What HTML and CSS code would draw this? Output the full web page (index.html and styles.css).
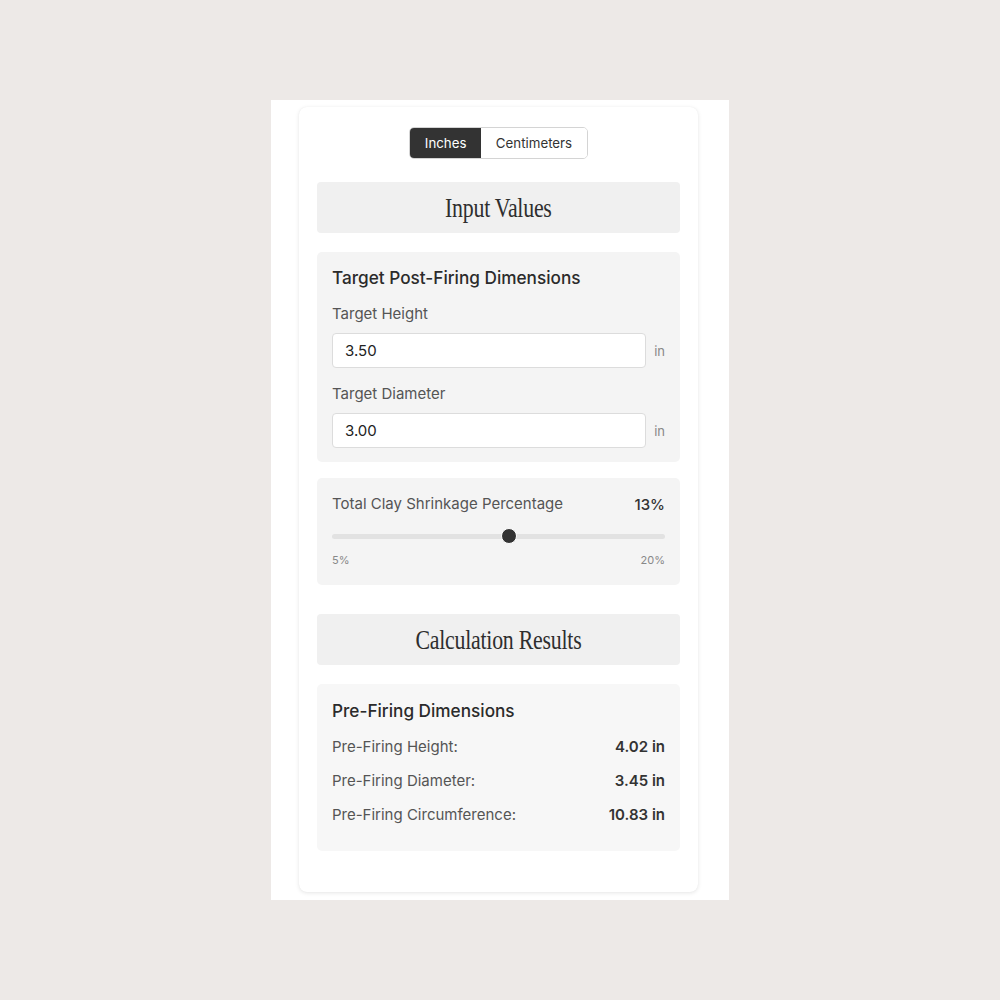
FILE: index.html
```html
<!DOCTYPE html>
<html>
<head>
<meta charset="utf-8">
<link rel="stylesheet" href="styles.css">
</head>
<body>
<div class="frame">
  <div class="card">
    <div class="toggle">
      <button class="seg active">Inches</button>
      <button class="seg">Centimeters</button>
    </div>

    <div class="band"><h2 class="serif">Input Values</h2></div>

    <div class="panel dims">
      <h3 class="panel-title">Target Post-Firing Dimensions</h3>
      <label class="field-label">Target Height</label>
      <div class="field-row">
        <input class="num" type="text" value="3.50">
        <span class="unit">in</span>
      </div>
      <label class="field-label">Target Diameter</label>
      <div class="field-row">
        <input class="num" type="text" value="3.00">
        <span class="unit">in</span>
      </div>
    </div>

    <div class="panel shrink">
      <div class="shrink-head">
        <span class="field-label">Total Clay Shrinkage Percentage</span>
        <span class="pct">13%</span>
      </div>
      <input class="range" type="range" min="5" max="20" value="13">
      <div class="range-ends"><span>5%</span><span>20%</span></div>
    </div>

    <div class="band results-band"><h2 class="serif">Calculation Results</h2></div>

    <div class="panel results">
      <h3 class="panel-title">Pre-Firing Dimensions</h3>
      <div class="res-row"><span>Pre-Firing Height:</span><b>4.02 in</b></div>
      <div class="res-row"><span>Pre-Firing Diameter:</span><b>3.45 in</b></div>
      <div class="res-row"><span>Pre-Firing Circumference:</span><b>10.83 in</b></div>
    </div>
  </div>
</div>
</body>
</html>
```

FILE: styles.css
```css
* { box-sizing: border-box; }
html, body { margin: 0; padding: 0; }
body {
  background: #ede9e7;
  font-family: Inter, "Noto Sans", sans-serif;
  color: #333;
  width: 1000px;
  height: 1000px;
}
.frame {
  width: 458px;
  height: 800px;
  margin: 100px 0 0 271px;
  background: #fff;
  padding: 7px 0 0 28px;
}
.card {
  width: 399px;
  height: 785px;
  background: #fff;
  border-radius: 8px;
  box-shadow: 0 1px 4px rgba(0,0,0,0.10), 0 0 1px rgba(0,0,0,0.06);
  padding: 20px 18px 0 18px;
  display: flex;
  flex-direction: column;
}
.toggle {
  align-self: center;
  display: flex;
  border: 1px solid #d4d4d4;
  border-radius: 5px;
  overflow: hidden;
  height: 32px;
}
.seg {
  font-family: Inter, sans-serif;
  font-size: 13.3px;
  border: 0;
  background: #fff;
  color: #333;
  padding: 0 15px;
  height: 100%;
}
.seg.active {
  background: #333;
  color: #fff;
  width: 71px;
}
.band {
  margin-top: 23px;
  background: #f0f0f0;
  border-radius: 4px;
  height: 51px;
  display: flex;
  align-items: center;
  justify-content: center;
}
.serif {
  margin: 0;
  font-family: "Liberation Serif", serif;
  font-weight: 400;
  font-size: 28px;
  color: #2e2e2e;
  transform: scaleX(0.78);
  letter-spacing: -0.3px;
}
.panel {
  background: #f4f4f4;
  border-radius: 5px;
  padding: 15px;
}
.dims { margin-top: 19px; height: 210px; padding-top: 14px; }
.panel-title {
  margin: 0;
  font-size: 17.2px;
  font-weight: 500;
  color: #2b2b2b;
  line-height: 24px;
}
.field-label {
  display: block;
  font-size: 15px;
  color: #555;
  line-height: 20px;
}
.dims .field-label { margin-top: 14px; }
.dims .field-label + .field-row { margin-top: 9px; }
.dims .field-row + .field-label { margin-top: 16px; }
.field-row {
  display: flex;
  align-items: center;
  gap: 8px;
}
.num {
  width: 315px;
  height: 35px;
  border: 1px solid #dcdcdc;
  border-radius: 4px;
  background: #fff;
  font-family: Inter, sans-serif;
  font-size: 15px;
  color: #222;
  padding: 0 12px;
  outline: none;
}
.unit {
  font-size: 13px;
  color: #888;
}
.shrink { margin-top: 16px; height: 107px; padding-top: 16px; }
.shrink-head {
  display: flex;
  justify-content: space-between;
  align-items: center;
}
.pct { font-size: 15px; font-weight: 500; color: #333; }
.range {
  -webkit-appearance: none;
  appearance: none;
  width: 100%;
  margin: 14px 0 0 0;
  height: 16px;
  background: transparent;
  display: block;
}
.range::-webkit-slider-runnable-track {
  height: 5px;
  background: #e2e2e2;
  border-radius: 3px;
}
.range::-webkit-slider-thumb {
  -webkit-appearance: none;
  width: 16px;
  height: 16px;
  border-radius: 50%;
  background: #333;
  border: 1px solid #fff;
  margin-top: -5.5px;
}
.range-ends {
  display: flex;
  justify-content: space-between;
  font-size: 11px;
  color: #888;
  margin-top: 9px;
}
.results-band { margin-top: 29px; }
.results {
  margin-top: 19px;
  height: 167px;
  background: #f7f7f7;
  padding-top: 15px;
}
.res-row {
  display: flex;
  justify-content: space-between;
  font-size: 15px;
  line-height: 20px;
  color: #555;
  margin-top: 14px;
}
.results .panel-title + .res-row { margin-top: 14px; }
.res-row b { font-weight: 600; color: #333; }
```
